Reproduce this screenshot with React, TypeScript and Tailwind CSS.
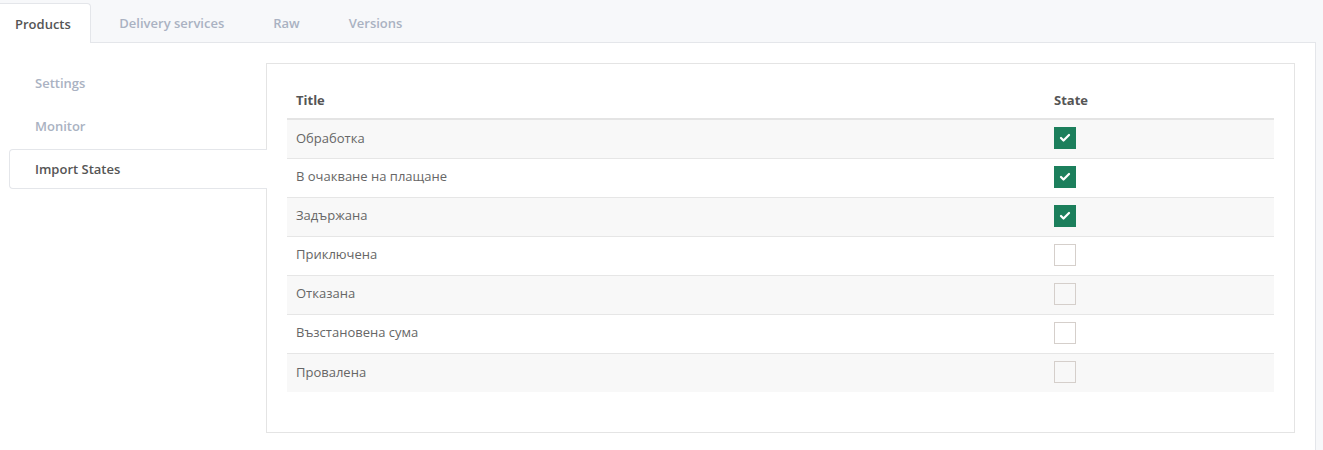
import { Check } from 'lucide-react'

const TABS = ['Products', 'Delivery services', 'Raw', 'Versions']
const NAV = ['Settings', 'Monitor', 'Import States']

const STATES: Array<{ title: string; checked: boolean }> = [
  { title: 'Обработка', checked: true },
  { title: 'В очакване на плащане', checked: true },
  { title: 'Задържана', checked: true },
  { title: 'Приключена', checked: false },
  { title: 'Отказана', checked: false },
  { title: 'Възстановена сума', checked: false },
  { title: 'Провалена', checked: false },
]

export default function App() {
  return (
    <div
      className="min-h-[450px] w-[1323px] bg-[#f7f8fa] text-[13px] text-[#666]"
      style={{ fontFamily: '"Open Sans", "Noto Sans", sans-serif' }}
    >
      <div className="flex h-[42px] items-end">
        {TABS.map((tab, i) => (
          <div
            key={tab}
            className={
              i === 0
                ? 'relative z-10 -mb-px flex h-[40px] items-center rounded-tr-[4px] border border-l-0 border-b-0 border-[#e4e6ea] bg-white pl-[15px] pr-[19px] pt-[2px] font-semibold text-[#555]'
                : `flex h-[39px] items-center px-[24.5px] pt-[2px] font-semibold text-[#aab2c2] ${i === 1 ? 'ml-[4px]' : ''}`
            }
          >
            {tab}
          </div>
        ))}
      </div>

      <div className="flex min-h-[408px] w-[1316px] border-t border-r border-[#e4e6ea] bg-white pl-[9px] pr-[20px] pt-[20px]">
        <div className="w-[257px] shrink-0">
          {NAV.map((item, i) => (
            <div
              key={item}
              className={
                i === 2
                  ? 'relative z-10 -mr-px mb-[3px] flex h-[40px] items-center rounded-l-[4px] border border-r-0 border-[#e4e6ea] bg-white pl-[25px] pt-[2px] font-semibold text-[#555]'
                  : 'mb-[3px] flex h-[40px] items-center pl-[26px] pt-[2px] font-semibold text-[#aab2c2]'
              }
            >
              {item}
            </div>
          ))}
        </div>

        <div className="h-[370px] flex-1 border border-[#e4e4e4] bg-white px-[20px] pt-[20px]">
          <table className="w-full border-collapse">
            <thead>
              <tr className="h-[35px] border-b-2 border-[#e4e4e4]">
                <th className="pl-[9px] text-left font-bold text-[#555]">Title</th>
                <th className="w-[220px] text-left font-bold text-[#555]">State</th>
              </tr>
            </thead>
            <tbody>
              {STATES.map((s, i) => (
                <tr
                  key={s.title}
                  className={`h-[39px] ${i < STATES.length - 1 ? 'border-b border-[#e6e6e6]' : ''} ${
                    i % 2 === 0 ? 'bg-[#f8f8f8]' : 'bg-white'
                  }`}
                >
                  <td className="pl-[9px] pb-[1px]">{s.title}</td>
                  <td className="pb-[2px]">
                    {s.checked ? (
                      <div className="flex h-[22px] w-[22px] items-center justify-center bg-[#1c7f5c]">
                        <Check className="h-[12px] w-[12px] text-white" strokeWidth={4.5} />
                      </div>
                    ) : (
                      <div className="h-[22px] w-[22px] border border-[#d5cfcb]" />
                    )}
                  </td>
                </tr>
              ))}
            </tbody>
          </table>
        </div>
      </div>
    </div>
  )
}
